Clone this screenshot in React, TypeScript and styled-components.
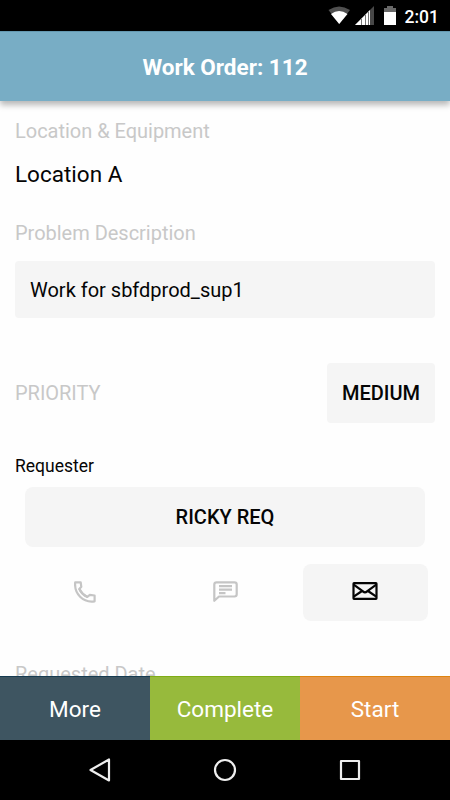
import React from "react";
import styled, { createGlobalStyle } from "styled-components";

const GlobalStyle = createGlobalStyle`
  * { box-sizing: border-box; }
  body { margin: 0; background: #fff; font-family: Roboto, "Noto Sans", sans-serif; }
  button { font: inherit; border: 0; padding: 0; margin: 0; }
`;

const Screen = styled.div`
  width: 450px;
  height: 800px;
  display: flex;
  flex-direction: column;
  overflow: hidden;
  background: #fefefe;
  color: #050505;
`;

const StatusBar = styled.div`
  height: 31px;
  flex: none;
  display: flex;
  align-items: center;
  justify-content: flex-end;
  padding: 2px 11px 0 0;
  background: #000;
  color: #fff;
  font-size: 17.5px;
  font-weight: 500;
  line-height: 28px;

  svg { margin: 0 7px 1px 0; }
`;

const Header = styled.header`
  height: 70px;
  flex: none;
  display: flex;
  align-items: center;
  justify-content: center;
  z-index: 1;
  background: #78adc5;
  border-top: 1px solid #6498b0;
  box-shadow: 0 4px 6px rgba(0, 0, 0, 0.28);
  color: #fff;
  font-size: 22.5px;
  font-weight: 700;
`;

const Content = styled.main`
  flex: 1;
  min-height: 0;
  overflow: hidden;
  display: flex;
  flex-direction: column;
  padding: 18px 15px 0;
`;

const Label = styled.div<{ $top?: number }>`
  flex: none;
  margin-top: ${(p) => p.$top ?? 0}px;
  font-size: 20px;
  line-height: 24px;
  letter-spacing: -0.02px;
  color: #c8c8c8;
  white-space: nowrap;
`;

const Value = styled.div`
  margin-top: 17px;
  font-size: 22.5px;
  line-height: 28px;
`;

const Description = styled.div`
  height: 57px;
  flex: none;
  margin-top: 16px;
  padding: 0 15px;
  border-radius: 4px;
  background: #f5f5f5;
  font-size: 20px;
  line-height: 59px;
`;

const PriorityRow = styled.div`
  flex: none;
  margin-top: 45px;
  height: 60px;
  display: flex;
  align-items: center;
  justify-content: space-between;
`;

const GreyButton = styled.button<{ $width: number; $height: number; $radius: number }>`
  width: ${(p) => p.$width}px;
  height: ${(p) => p.$height}px;
  flex: none;
  display: flex;
  align-items: center;
  justify-content: center;
  border-radius: ${(p) => p.$radius}px;
  background: #f5f5f5;
  color: #050505;
  font-size: 20px;
  font-weight: 500;
`;

const Requester = styled.div`
  flex: none;
  margin: 32px 0 10px;
  font-size: 17.5px;
  line-height: 22px;
`;

const RequesterPanel = styled.div`
  flex: none;
  padding: 0 10px;
`;

const ContactRow = styled.div`
  flex: none;
  margin: 17px -10px 0;
  display: flex;
  height: 57px;
  align-items: center;
`;

const ContactSlot = styled.div`
  flex: 1;
  display: flex;
  align-items: center;
  justify-content: center;
  color: #c5c5c5;

  svg { margin-bottom: 1px; }
  button svg { margin-bottom: 3px; }
`;

const Actions = styled.footer`
  height: 64px;
  flex: none;
  display: grid;
  grid-template-columns: repeat(3, 1fr);
`;

const Action = styled.button<{ $bg: string; $edge: string }>`
  background: ${(p) => p.$bg};
  border-top: 1px solid ${(p) => p.$edge};
  color: #fff;
  font-size: 22.5px;
`;

const NavBar = styled.nav`
  height: 60px;
  flex: none;
  display: flex;
  align-items: center;
  justify-content: center;
  gap: 101px;
  background: #000;
`;

const StatusIcons = () => (
  <svg width="70" height="20" viewBox="0 0 70 20">
    <path d="M0.5 4Q11 -3 22 4L11.2 18Z" fill="#505050" />
    <path d="M3 8Q11 2 19.5 8L11.2 18Z" fill="#fff" />
    <path d="M27 19L46 0V19Z" fill="#484848" />
    <path d="M27 19L42 4V19Z" fill="#fff" />
    <path d="M33.5 13V19M37.5 9V19M40.5 6V19" stroke="#777" strokeWidth="1" />
    <path d="M56 2H59V0H65V2H68V7H56Z" fill="#686868" />
    <path d="M56 6H68V19H56Z" fill="#fff" />
  </svg>
);

const PhoneIcon = () => (
  <svg width="22" height="22" viewBox="0 0 22 22" fill="none" stroke="currentColor" strokeWidth="2.2" strokeLinejoin="round">
    <path d="M1.2 1.3H6.7L7.3 5.8L5.3 8Q8 13.3 13.3 16L15.8 13.9L20.6 14.5V20.3C9 22 0 12.8 1.2 1.3Z" />
    <path d="M5.3 7.5Q7.5 13.5 13.5 15.8" />
  </svg>
);

const ChatIcon = () => (
  <svg width="25" height="22" viewBox="0 0 25 22" fill="none" stroke="currentColor" strokeWidth="2.2" strokeLinejoin="round">
    <path d="M1.3 19.8V3.5Q1.3 1.3 3.5 1.3H21.5Q23.7 1.3 23.7 3.5V13.3Q23.7 15.5 21.5 15.5H6Z" />
    <path d="M6 5.2H19M6 8.7H19M6 12.2H12.5" />
  </svg>
);

const MailIcon = () => (
  <svg width="26" height="18" viewBox="0 0 26 18" fill="none" stroke="currentColor" strokeWidth="2.2" strokeLinejoin="round">
    <rect x="1.5" y="1.2" width="23" height="15.6" rx="0.5" />
    <path d="M1.7 2.7L11 9.4Q13 11.4 15 9.4L24.3 2.7M1.7 14.7L10 9M24.3 14.7L16 9" />
  </svg>
);

export default function App() {
  return (
    <>
      <GlobalStyle />
      <Screen>
        <StatusBar>
          <StatusIcons />
          <span>2:01</span>
        </StatusBar>
        <Header>Work Order: 112</Header>
        <Content>
          <Label>Location &amp; Equipment</Label>
          <Value>Location A</Value>
          <Label $top={33}>Problem Description</Label>
          <Description>Work for sbfdprod_sup1</Description>
          <PriorityRow>
            <Label>PRIORITY</Label>
            <GreyButton $width={108} $height={60} $radius={4}>MEDIUM</GreyButton>
          </PriorityRow>
          <Requester>Requester</Requester>
          <RequesterPanel>
            <GreyButton $width={400} $height={60} $radius={8}>RICKY REQ</GreyButton>
            <ContactRow>
              <ContactSlot><PhoneIcon /></ContactSlot>
              <ContactSlot><ChatIcon /></ContactSlot>
              <ContactSlot>
                <GreyButton $width={125} $height={57} $radius={8}><MailIcon /></GreyButton>
              </ContactSlot>
            </ContactRow>
          </RequesterPanel>
          <Label $top={41}>Requested Date</Label>
        </Content>
        <Actions>
          <Action $bg="#3e5561" $edge="#163b50">More</Action>
          <Action $bg="#97ba3c" $edge="#7fac16">Complete</Action>
          <Action $bg="#e7974b" $edge="#de8410">Start</Action>
        </Actions>
        <NavBar>
          <svg width="24" height="26" viewBox="0 0 24 26" fill="none" stroke="#eee" strokeWidth="2.2" strokeLinejoin="round">
            <path d="M2.5 13L21 2.5V23.5Z" />
          </svg>
          <svg width="24" height="24" viewBox="0 0 24 24" fill="none" stroke="#eee" strokeWidth="2.2">
            <circle cx="12" cy="12" r="10" />
          </svg>
          <svg width="24" height="24" viewBox="0 0 24 24" fill="none" stroke="#eee" strokeWidth="2.2" strokeLinejoin="round">
            <rect x="3" y="3" width="18" height="18" />
          </svg>
        </NavBar>
      </Screen>
    </>
  );
}
